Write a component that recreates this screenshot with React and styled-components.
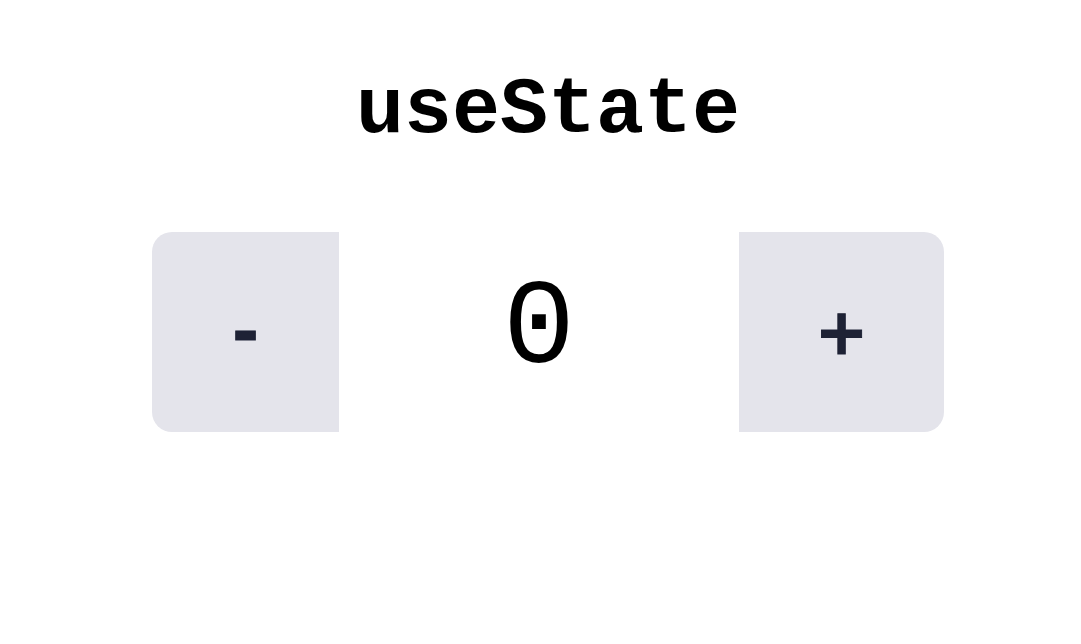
import React, { useState } from "react";
import styled, { createGlobalStyle } from "styled-components";

const GlobalStyle = createGlobalStyle`
  html, body {
    margin: 0;
    padding: 0;
    background: #ffffff;
  }
`;

const Page = styled.div`
  display: flex;
  flex-direction: column;
  align-items: center;
  padding-left: 15px;
  padding-top: 71px;
  font-family: "Liberation Mono", monospace;
`;

const Title = styled.h1`
  margin: 0;
  font-size: 80px;
  font-weight: 700;
  line-height: 1;
  color: #000;
`;

const Counter = styled.div`
  display: flex;
  margin-top: 81px;
  height: 200px;
`;

const StepButton = styled.button`
  width: ${(p) => p.$width}px;
  height: 100%;
  border: none;
  padding: 0;
  background: #e4e4eb;
  color: #1e2235;
  font-family: "DejaVu Sans", sans-serif;
  font-size: 64px;
  font-weight: 700;
  line-height: 1;
  -webkit-text-stroke: 1px #1e2235;
  border-radius: ${(p) => (p.$side === "left" ? "20px 0 0 20px" : "0 20px 20px 0")};
  cursor: pointer;
`;

const Value = styled.div`
  width: 400px;
  display: flex;
  align-items: center;
  justify-content: center;
  padding-bottom: 4px;
  box-sizing: border-box;
  font-size: 120px;
  color: #000;
`;

export default function App() {
  const [count, setCount] = useState(0);
  return (
    <>
      <GlobalStyle />
      <Page>
        <Title>useState</Title>
        <Counter>
          <StepButton $side="left" $width={187} onClick={() => setCount((c) => c - 1)}>
            -
          </StepButton>
          <Value>{count}</Value>
          <StepButton $side="right" $width={205} onClick={() => setCount((c) => c + 1)}>
            +
          </StepButton>
        </Counter>
      </Page>
    </>
  );
}
